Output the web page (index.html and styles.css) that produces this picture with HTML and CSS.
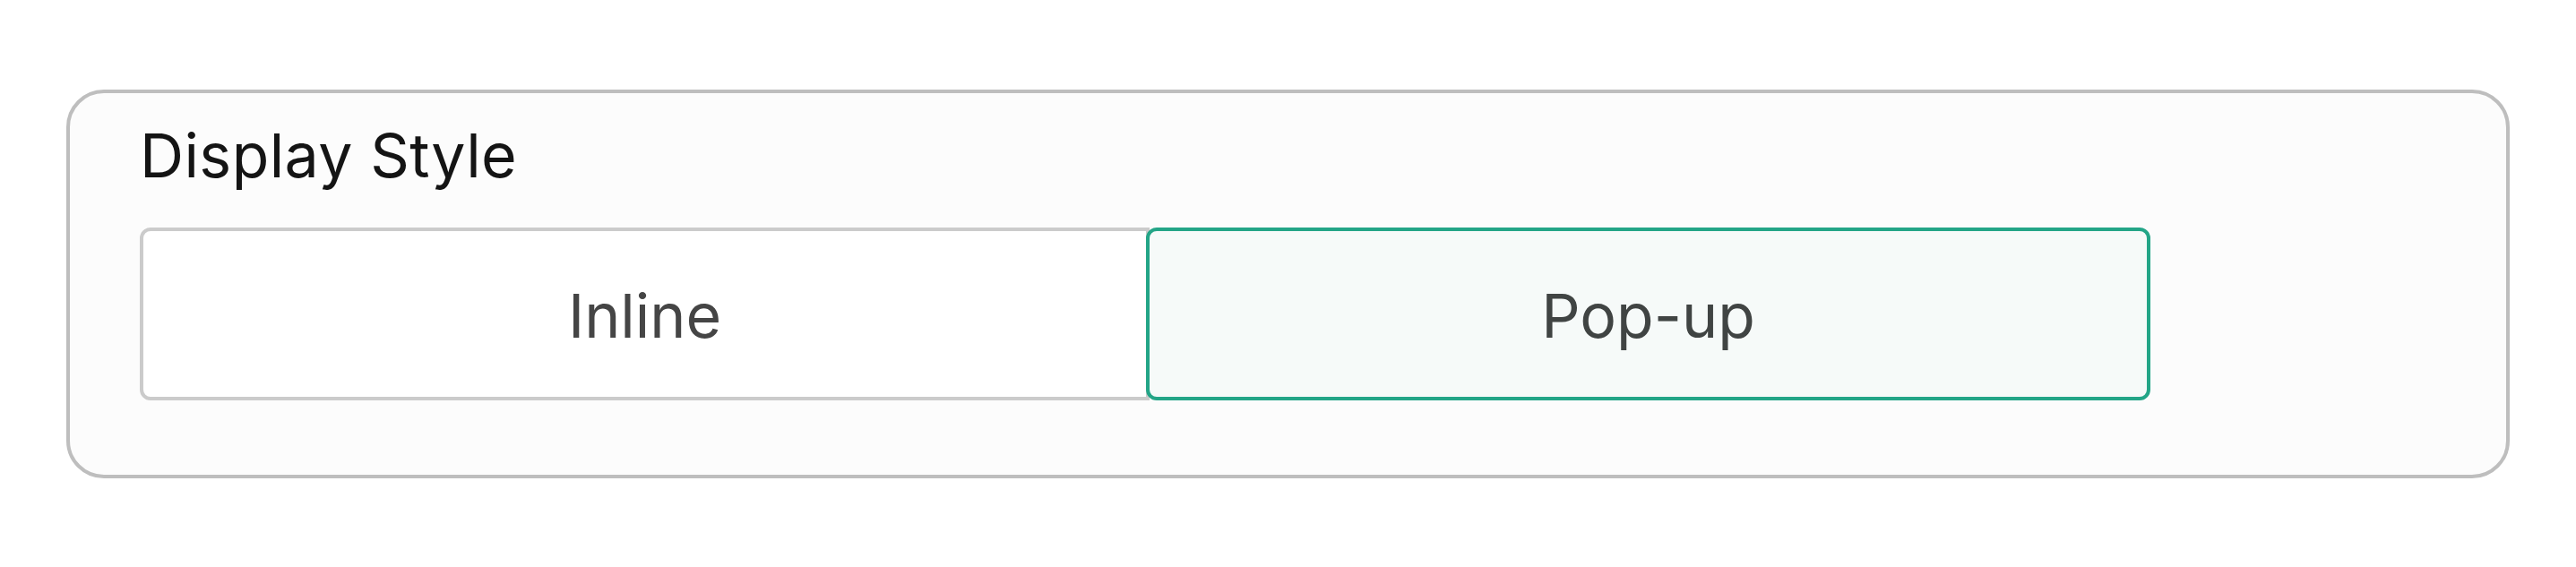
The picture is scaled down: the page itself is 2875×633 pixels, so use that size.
FILE: index.html
```html
<!DOCTYPE html>
<html lang="en">
<head>
<meta charset="utf-8">
<title>Display Style</title>
<link rel="stylesheet" href="styles.css">
</head>
<body>
<section class="card">
  <h2 class="card-title">Display Style</h2>
  <div class="segmented" role="radiogroup">
    <button class="segment segment-left" role="radio" aria-checked="false">Inline</button>
    <button class="segment segment-right is-active" role="radio" aria-checked="true">Pop-up</button>
  </div>
</section>
</body>
</html>
```

FILE: styles.css
```css
html, body {
  margin: 0;
  padding: 0;
  background: #ffffff;
}

body {
  font-family: Inter, "Noto Sans", "Liberation Sans", sans-serif;
  padding: 100px 0 0 74px;
}

.card {
  box-sizing: border-box;
  width: 2727px;
  border: 4px solid #bebebe;
  border-radius: 42px;
  background: #fcfcfc;
  padding: 27px 78px 83px;
}

.card-title {
  margin: 0 0 39px;
  font-size: 68px;
  line-height: 84px;
  font-weight: 400;
  letter-spacing: 0.4px;
  color: #141414;
}

.segmented {
  display: flex;
}

.segment {
  box-sizing: border-box;
  height: 193px;
  border: 4px solid #cbcbcb;
  background: #ffffff;
  font-family: inherit;
  font-size: 68px;
  color: #454545;
  display: flex;
  align-items: center;
  justify-content: center;
  padding: 3px 0 0;
}

.segment-left {
  width: 1127px;
  border-radius: 12px 0 0 12px;
}

.segment-right {
  width: 1121px;
  margin-left: -4px;
  border-radius: 12px;
  position: relative;
}

.segment.is-active {
  border-color: #23a587;
  background: #f6faf9;
  color: #404443;
}
```
